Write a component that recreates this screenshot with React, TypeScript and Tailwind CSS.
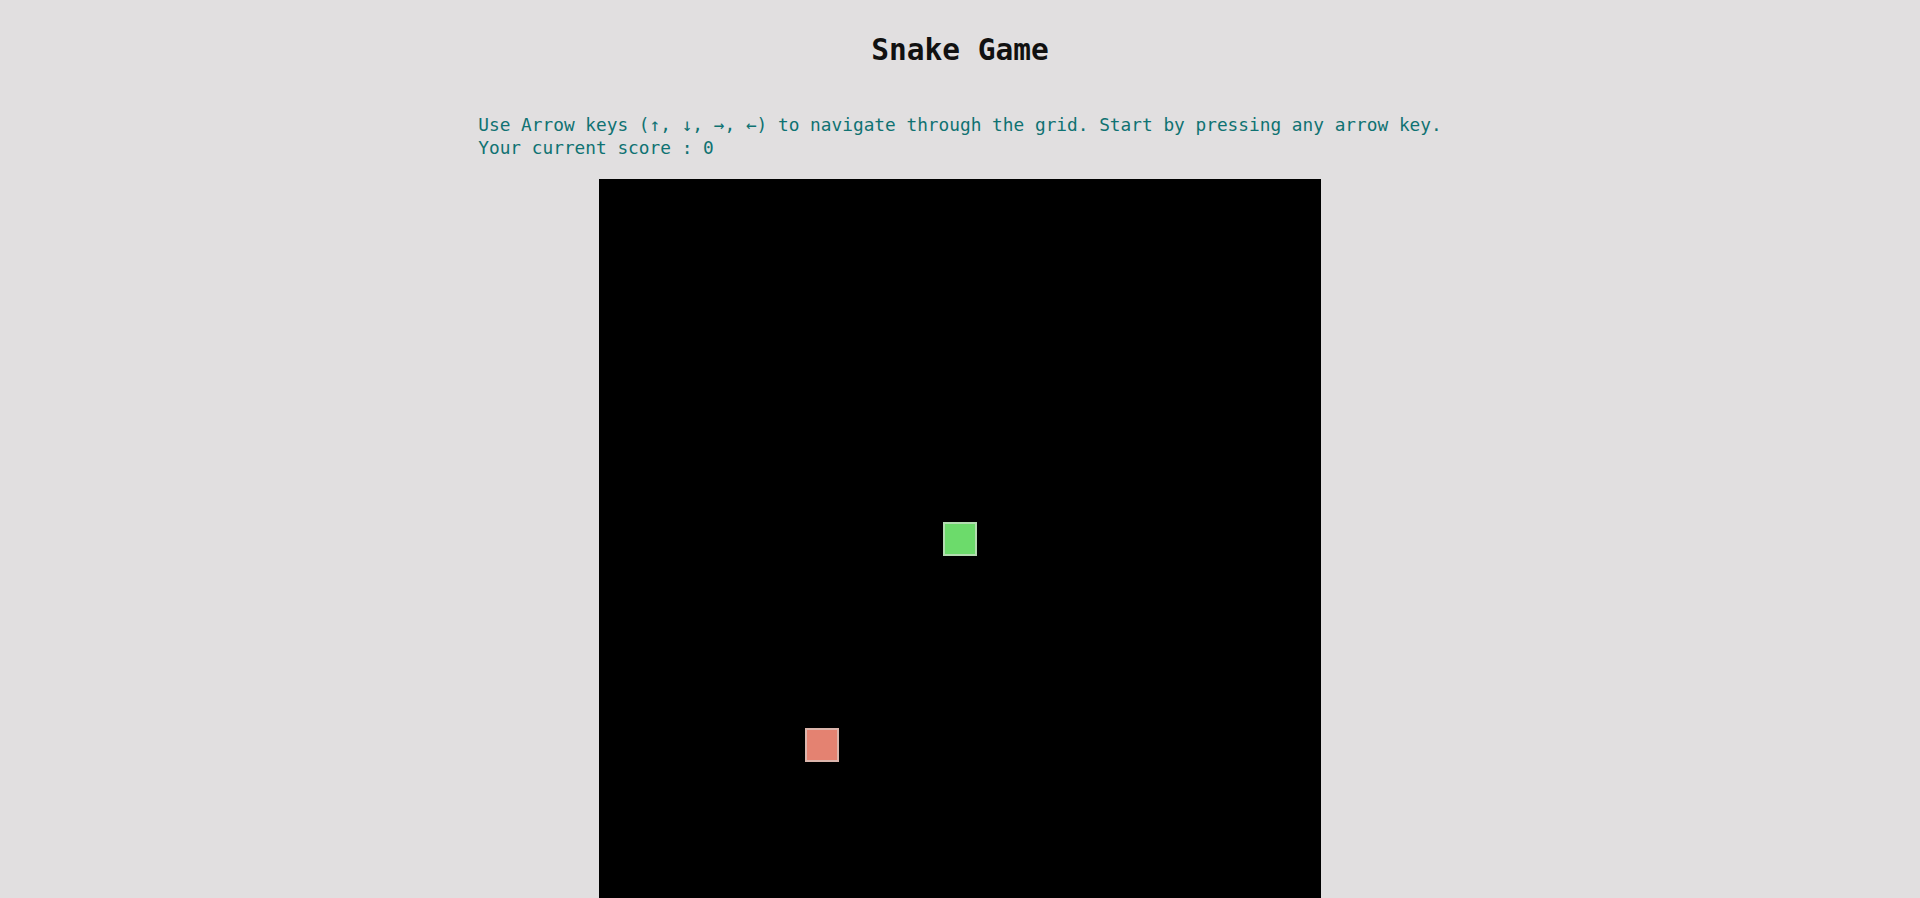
import React from 'react';

const CELL = 34;

const cells = [
  { x: 344, y: 343, fill: 'bg-[#6cdb6b]', edge: 'border-[#b3dcb0]' },
  { x: 206, y: 549, fill: 'bg-[#e48271]', edge: 'border-[#dcb5ac]' },
];

export default function App() {
  return (
    <div className="min-h-screen bg-[#e1dfe0] flex flex-col items-center font-['DejaVu_Sans_Mono',monospace]">
      <h1 className="pt-[33px] text-[29.5px] leading-[34px] font-bold text-[#111111]">Snake Game</h1>

      <div className="mt-[46px] w-fit text-left text-[17.8px] leading-[23px] text-[#0f7272] whitespace-pre">
        <p>Use Arrow keys (↑, ↓, →, ←) to navigate through the grid. Start by pressing any arrow key.</p>
        <p>Your current score : 0</p>
      </div>

      {/* board */}
      <div className="relative mt-[20px] w-[722px] h-[722px] bg-black shrink-0">
        {cells.map((c, i) => (
          <div
            key={i}
            className={`absolute border-2 ${c.fill} ${c.edge}`}
            style={{ left: c.x, top: c.y, width: CELL, height: CELL }}
          />
        ))}
      </div>
    </div>
  );
}
